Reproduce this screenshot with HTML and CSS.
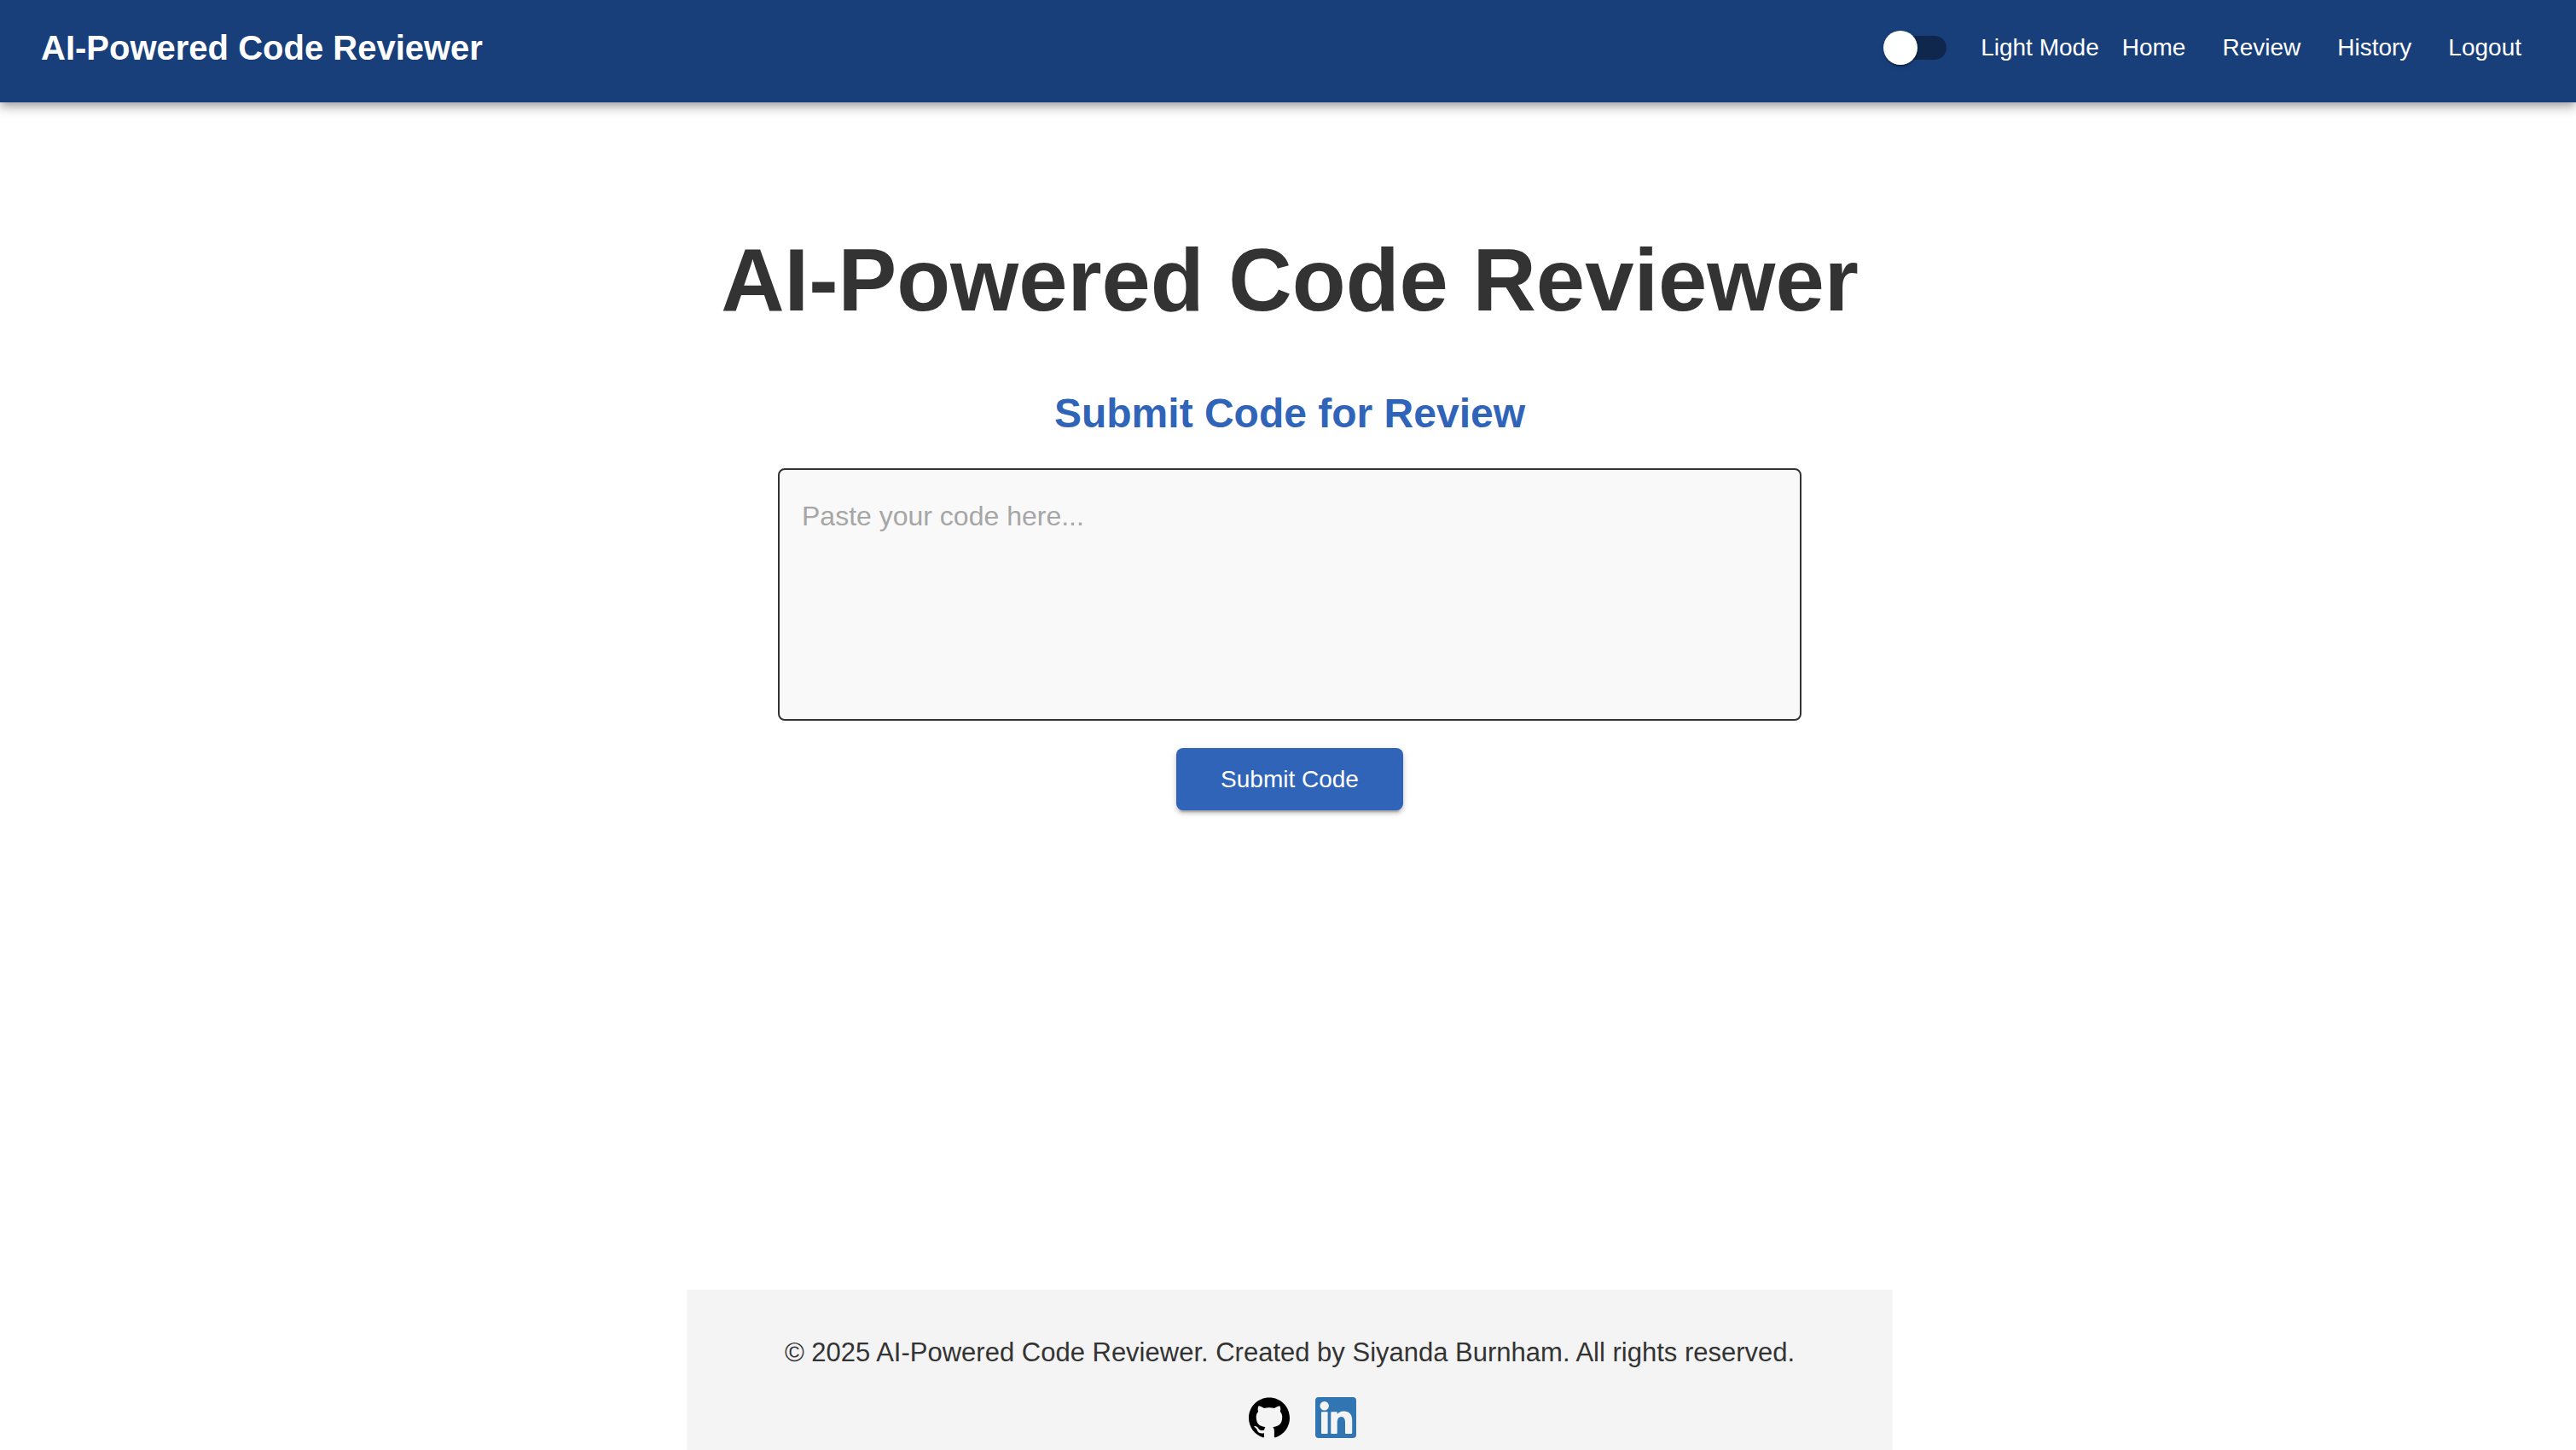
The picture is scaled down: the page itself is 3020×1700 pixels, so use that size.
FILE: index.html
```html
<!DOCTYPE html>
<html lang="en">
<head>
  <meta charset="utf-8">
  <title>AI-Powered Code Reviewer</title>
  <link rel="stylesheet" href="styles.css">
</head>
<body>
  <header class="navbar">
    <div class="brand">AI-Powered Code Reviewer</div>
    <nav class="nav">
      <label class="mode"><input class="switch" type="checkbox"><span>Light Mode</span></label>
      <a class="nav-link" href="#home">Home</a>
      <a class="nav-link" href="#review">Review</a>
      <a class="nav-link" href="#history">History</a>
      <a class="nav-link" href="#logout">Logout</a>
    </nav>
  </header>
  <main class="main">
    <h1 class="title">AI-Powered Code Reviewer</h1>
    <form class="review-form">
      <label class="subtitle" for="code">Submit Code for Review</label>
      <textarea class="code-input" id="code" placeholder="Paste your code here..."></textarea>
      <button class="submit" type="button">Submit Code</button>
    </form>
  </main>
  <footer class="footer">
    <p class="copyright">© 2025 AI-Powered Code Reviewer. Created by Siyanda Burnham. All rights reserved.</p>
    <div class="social">
      <a class="social-link" href="#github" aria-label="GitHub">
        <svg viewBox="0 0 24 24" width="48" height="48"><path d="M12 .297c-6.63 0-12 5.373-12 12 0 5.303 3.438 9.8 8.205 11.385.6.113.82-.258.82-.577 0-.285-.01-1.04-.015-2.04-3.338.724-4.042-1.61-4.042-1.61C4.422 18.07 3.633 17.7 3.633 17.7c-1.087-.744.084-.729.084-.729 1.205.084 1.838 1.236 1.838 1.236 1.07 1.835 2.809 1.305 3.495.998.108-.776.417-1.305.76-1.605-2.665-.3-5.466-1.332-5.466-5.93 0-1.31.465-2.38 1.235-3.22-.135-.303-.54-1.523.105-3.176 0 0 1.005-.322 3.3 1.23.96-.267 1.98-.399 3-.405 1.02.006 2.04.138 3 .405 2.28-1.552 3.285-1.23 3.285-1.23.645 1.653.24 2.873.12 3.176.765.84 1.23 1.91 1.23 3.22 0 4.61-2.805 5.625-5.475 5.92.42.36.81 1.096.81 2.22 0 1.606-.015 2.896-.015 3.286 0 .315.21.69.825.57C20.565 22.092 24 17.592 24 12.297c0-6.627-5.373-12-12-12"/></svg>
      </a>
      <a class="social-link" href="#linkedin" aria-label="LinkedIn">
        <svg viewBox="0 0 48 48" width="48" height="48"><rect width="48" height="48" rx="4" fill="#3175b3"/><g fill="#f4f4f4"><circle cx="10.7" cy="10.2" r="5.2"/><rect x="7" y="17.3" width="7.6" height="25.7" rx="1"/><path d="M19 17.3h6q.7 0 .7.7V20q2.5-3.5 7.5-3.5 10 0 10 11V42q0 1-1 1H36q-1 0-1-1V30q0-7-4.5-7t-4.8 6v13q0 1-1 1H19.3q-1 0-1-1V18.5q0-1.2.7-1.2z"/></g></svg>
      </a>
    </div>
  </footer>
</body>
</html>
```
FILE: styles.css
```css
* { box-sizing: border-box; }

body {
  margin: 0;
  min-height: 100vh;
  display: flex;
  flex-direction: column;
  background: #fff;
  color: #333;
  font-family: "Liberation Sans", Arial, Helvetica, sans-serif;
}

.navbar {
  display: flex;
  align-items: center;
  justify-content: space-between;
  height: 120px;
  padding: 0 64px 8px 48px;
  background: #193f7b;
  color: #fff;
  box-shadow: 0 4px 8px -2px rgba(0, 0, 0, .2), 0 8px 10px rgba(0, 0, 0, .14), 0 2px 20px rgba(0, 0, 0, .12);
}

.brand { font-size: 40px; font-weight: 700; line-height: 64px; }

.nav { display: flex; align-items: center; gap: 43px; font-size: 28px; line-height: 48px; }

.mode { display: flex; align-items: center; gap: 40px; margin-right: -16px; }

.switch {
  appearance: none;
  position: relative;
  width: 68px;
  height: 28px;
  margin: 0;
  border-radius: 14px;
  background: rgba(0, 0, 0, .38);
}

.switch::before {
  content: "";
  position: absolute;
  left: -6px;
  top: -6px;
  width: 40px;
  height: 40px;
  border-radius: 50%;
  background: #fff;
  box-shadow: 0 4px 2px -2px rgba(0, 0, 0, .2), 0 2px 2px rgba(0, 0, 0, .14), 0 2px 6px rgba(0, 0, 0, .12);
}

.switch:checked::before { left: 34px; }

.nav-link { color: #fff; text-decoration: none; }

.main {
  flex: 1;
  display: flex;
  flex-direction: column;
  align-items: center;
  padding: 147px 0 64px 4px;
}

.title { margin: 0; font-size: 103px; line-height: 124px; font-weight: 700; }

.review-form {
  display: flex;
  flex-direction: column;
  align-items: center;
  width: 100%;
  max-width: 1200px;
  margin-top: 62px;
}

.subtitle { color: #2f64b9; font-size: 48px; line-height: 64px; font-weight: 700; }

.code-input {
  width: 100%;
  height: 296px;
  margin: 32px 0;
  padding: 34px 26px;
  border: 2px solid #333;
  border-radius: 8px;
  background: #f9f9f9;
  color: #333;
  font: 32px/40px "Liberation Sans", Arial, Helvetica, sans-serif;
  resize: none;
}

.code-input::placeholder { color: #a6a6a6; }

.submit {
  min-width: 266px;
  padding: 12px 48px;
  border: 0;
  border-radius: 8px;
  background: #2f64b9;
  color: #fff;
  font: 28px/49px "Liberation Sans", Arial, Helvetica, sans-serif;
  box-shadow: 0 6px 2px -4px rgba(0, 0, 0, .2), 0 4px 4px rgba(0, 0, 0, .14), 0 2px 10px rgba(0, 0, 0, .12);
}

.footer {
  width: 100%;
  max-width: 1414px;
  align-self: center;
  margin-left: 4px;
  padding: 50px 32px 14px;
  background: #f4f4f4;
  text-align: center;
}

.copyright { margin: 0; font-size: 31px; line-height: 48px; }

.social { display: flex; justify-content: center; margin-top: 28px; }

.social-link { display: block; height: 48px; margin-left: 30px; color: #000; }

.social-link svg { display: block; fill: currentColor; }
```
